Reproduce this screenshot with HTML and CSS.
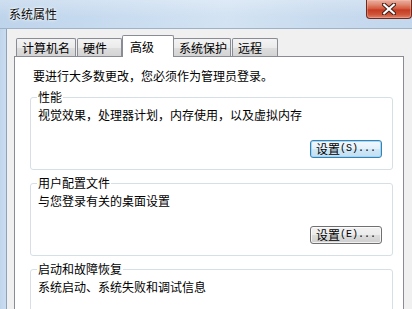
FILE: index.html
```html
<!DOCTYPE html>
<html lang="zh-CN">
<head>
<meta charset="utf-8">
<title>系统属性</title>
<link rel="stylesheet" href="styles.css">
</head>
<body>
<div class="window">
  <div class="titlebar">
    <span class="title">系统属性</span>
    <button class="close" aria-label="关闭">
      <svg width="14" height="12" viewBox="0 0 14 12">
        <path d="M2 1.5 L12 10.5 M12 1.5 L2 10.5" stroke="#43201a" stroke-width="4.2" stroke-linecap="square" fill="none"/>
        <path d="M2.2 1.7 L11.8 10.3 M11.8 1.7 L2.2 10.3" stroke="#ffffff" stroke-width="2.2" stroke-linecap="square" fill="none"/>
      </svg>
    </button>
  </div>
  <div class="frame">
    <div class="side"></div>
    <div class="client">
      <div class="tabs">
        <div class="tab w-name">计算机名</div>
        <div class="tab w-hw">硬件</div>
        <div class="tab selected w-adv">高级</div>
        <div class="tab w-prot">系统保护</div>
        <div class="tab w-remote">远程</div>
      </div>
      <div class="panel">
        <p class="intro">要进行大多数更改，您必须作为管理员登录。</p>
        <fieldset class="group">
          <legend>性能</legend>
          <p class="desc">视觉效果，处理器计划，内存使用，以及虚拟内存</p>
          <div class="actions"><button class="btn default">设置<span class="lat">(S)...</span></button></div>
        </fieldset>
        <fieldset class="group">
          <legend>用户配置文件</legend>
          <p class="desc">与您登录有关的桌面设置</p>
          <div class="actions"><button class="btn">设置<span class="lat">(E)...</span></button></div>
        </fieldset>
        <fieldset class="group group-last">
          <legend>启动和故障恢复</legend>
          <p class="desc">系统启动、系统失败和调试信息</p>
        </fieldset>
      </div>
    </div>
  </div>
</div>
</body>
</html>
```

FILE: styles.css
```css
* { box-sizing: border-box; }

html, body {
  margin: 0;
  padding: 0;
  width: 412px;
  height: 309px;
  overflow: hidden;
  background: #f0f0f0;
  font-family: "Noto Sans CJK SC", "Noto Sans", sans-serif;
  font-size: 12px;
  color: #000;
}

.window {
  display: flex;
  flex-direction: column;
  width: 412px;
  height: 309px;
}

.titlebar {
  height: 29px;
  flex: none;
  display: flex;
  justify-content: space-between;
  align-items: flex-start;
  background:
    linear-gradient(180deg, rgba(255,255,255,0.25), rgba(255,255,255,0) 60%),
    linear-gradient(90deg, #bed4eb 0%, #c9dcf0 30%, #d3e3f3 55%, #c7daee 80%, #c3d7ed 100%);
  border-bottom: 1px solid #9fb3c8;
}

.title {
  margin: 7px 0 0 9px;
  line-height: 14px;
  font-size: 12px;
  color: #0a0a0a;
  text-shadow: 0 0 4px #ffffff, 0 0 2px #ffffff;
}

.close {
  width: 46px;
  height: 19px;
  margin: 0;
  padding: 0;
  border: 1px solid #6d2b20;
  border-top: none;
  border-radius: 0 0 4px 4px;
  background: linear-gradient(180deg, #eab0a2 0%, #e08a73 25%, #d45a3e 48%, #c53b22 55%, #cf5438 80%, #e0836a 100%);
  display: flex;
  align-items: center;
  justify-content: center;
  box-shadow: inset 0 0 0 1px rgba(255,200,190,0.35);
}

.close svg { display: block; }

.frame {
  flex: 1;
  display: flex;
  min-height: 0;
}

.side {
  width: 7px;
  flex: none;
  background: linear-gradient(90deg, #c0d5eb, #cadcf0);
  border-right: 1px solid #8ea2b8;
}

.client {
  flex: 1;
  min-width: 0;
  padding: 6px 8px 0 7px;
  background: #f0f0f0;
  display: flex;
  flex-direction: column;
}

.tabs {
  display: flex;
  align-items: flex-start;
  padding-left: 2px;
  position: relative;
  z-index: 1;
}

.tab {
  flex: none;
  height: 18px;
  margin-top: 3px;
  padding: 1px 0 0 5px;
  line-height: 16px;
  border: 1px solid #898c95;
  border-bottom: none;
  border-radius: 2px 2px 0 0;
  background: linear-gradient(180deg, #f3f3f3 0%, #ebebeb 50%, #dedede 50%, #d4d4d4 100%);
  white-space: nowrap;
}

.tab.selected {
  height: 22px;
  margin-top: 0;
  padding: 3px 0 0 7px;
  background: #ffffff;
}

.w-name { width: 60px; margin-right: 1px; }
.w-hw { width: 45px; }
.w-adv { width: 52px; }
.w-prot { width: 58px; margin-left: -1px; margin-right: 1px; }
.w-remote { width: 46px; }

.panel {
  margin-top: -1px;
  flex: 1;
  min-height: 0;
  background: #ffffff;
  border: 1px solid #898c95;
  border-bottom: none;
  padding: 12px 10px 0 15px;
  display: flex;
  flex-direction: column;
  gap: 6px;
}

.intro {
  margin: 0 0 1px 3px;
  line-height: 14px;
}

.group {
  margin: 0;
  min-width: 0;
  flex: none;
  border: 1px solid #d5dfe5;
  border-radius: 3px;
  padding: 4px 10px 11px 7px;
}

.group-last {
  padding-bottom: 40px;
}

.group legend {
  padding: 0 1px;
  margin-left: -1px;
  line-height: 14px;
}

.desc {
  margin: 0;
  line-height: 14px;
}

.actions {
  display: flex;
  justify-content: flex-end;
  margin-top: 18px;
}

.btn {
  flex: none;
  width: 72px;
  min-width: 0;
  max-width: 72px;
  height: 18px;
  margin: 0;
  padding: 0;
  font-family: "Noto Sans CJK SC", "Noto Sans", sans-serif;
  font-size: 12px;
  line-height: 16px;
  color: #000;
  border: 1px solid #707070;
  border-radius: 3px;
  background: linear-gradient(180deg, #f2f2f2 0%, #ebebeb 50%, #dddddd 50%, #cfcfcf 100%);
  box-shadow: inset 0 0 0 1px rgba(255,255,255,0.7);
  display: flex;
  align-items: center;
  justify-content: center;
  white-space: nowrap;
}

.btn.default {
  border-color: #3c7fb1;
  background: linear-gradient(180deg, #f1f8fd 0%, #e3f1fb 50%, #d0e8f7 50%, #c2dff2 100%);
  box-shadow: inset 0 0 0 1px rgba(150,215,245,0.9);
}

.lat {
  font-family: "Liberation Mono", "DejaVu Sans Mono", monospace;
  font-size: 10px;
}
```
